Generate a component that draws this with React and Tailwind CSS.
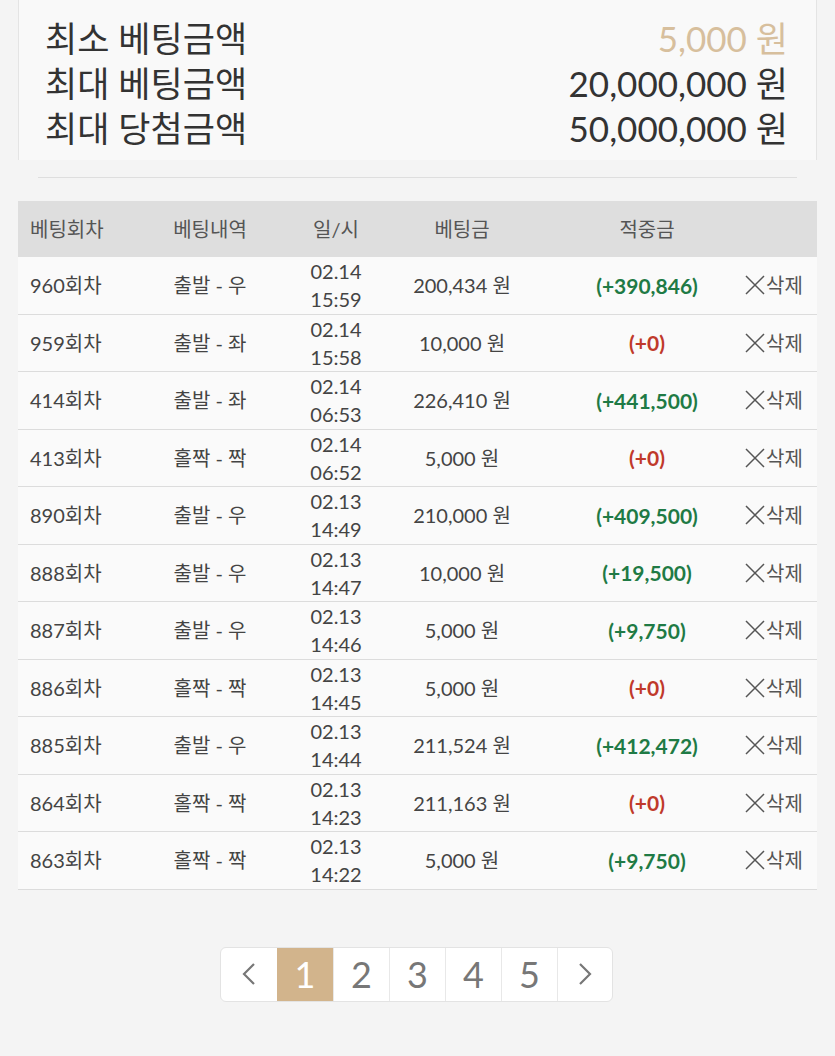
import React from "react";

const rows = [
  ["960회차", "출발 - 우", "02.14", "15:59", "200,434 원", "(+390,846)", true],
  ["959회차", "출발 - 좌", "02.14", "15:58", "10,000 원", "(+0)", false],
  ["414회차", "출발 - 좌", "02.14", "06:53", "226,410 원", "(+441,500)", true],
  ["413회차", "홀짝 - 짝", "02.14", "06:52", "5,000 원", "(+0)", false],
  ["890회차", "출발 - 우", "02.13", "14:49", "210,000 원", "(+409,500)", true],
  ["888회차", "출발 - 우", "02.13", "14:47", "10,000 원", "(+19,500)", true],
  ["887회차", "출발 - 우", "02.13", "14:46", "5,000 원", "(+9,750)", true],
  ["886회차", "홀짝 - 짝", "02.13", "14:45", "5,000 원", "(+0)", false],
  ["885회차", "출발 - 우", "02.13", "14:44", "211,524 원", "(+412,472)", true],
  ["864회차", "홀짝 - 짝", "02.13", "14:23", "211,163 원", "(+0)", false],
  ["863회차", "홀짝 - 짝", "02.13", "14:22", "5,000 원", "(+9,750)", true],
];

const cols = "grid grid-cols-[122px_140px_112px_140px_206px_77px]";

const XIcon = () => (
  <svg width="20" height="20" viewBox="0 0 20 20" className="shrink-0">
    <path d="M1 1 L19 19 M19 1 L1 19" stroke="#555" strokeWidth="1.5" fill="none" />
  </svg>
);

export default function App() {
  return (
    <div
      className="min-h-screen bg-[#f4f4f4] text-[#444]"
      style={{ fontFamily: "Lato, 'Noto Sans CJK KR', sans-serif" }}
    >
      {/* limits card */}
      <div className="mx-[18px] bg-[#f9f9f9] border-x border-[#e4e4e4] pt-[16px] pb-[9px] pl-[26px] pr-[28px] text-[35px] leading-[45px] text-[#333]">
        <div className="flex justify-between">
          <span>최소 베팅금액</span>
          <span className="text-[#d7bf9d]">5,000 원</span>
        </div>
        <div className="flex justify-between">
          <span>최대 베팅금액</span>
          <span>20,000,000 원</span>
        </div>
        <div className="flex justify-between">
          <span>최대 당첨금액</span>
          <span>50,000,000 원</span>
        </div>
      </div>
      <div className="mx-[38px] mt-[17px] border-b border-[#dedede]"></div>

      {/* history table */}
      <div className="mx-[18px] mt-[23px] text-[20px]">
        <div className={`${cols} h-[56px] items-center bg-[#dedede] text-[#555]`}>
          <div className="pl-[12px]">베팅회차</div>
          <div className="text-center">베팅내역</div>
          <div className="text-center">일/시</div>
          <div className="text-center">베팅금</div>
          <div className="text-center pl-[24px]">적중금</div>
          <div></div>
        </div>
        {rows.map((r, i) => (
          <div
            key={i}
            className={`${cols} h-[57.5px] items-center bg-[#fafafa] border-b border-[#dcdcdc]`}
          >
            <div className="pl-[12px]">{r[0]}</div>
            <div className="text-center">{r[1]}</div>
            <div className="text-center leading-[28px]">
              <div>{r[2]}</div>
              <div>{r[3]}</div>
            </div>
            <div className="text-center">{r[4]}</div>
            <div
              className={`text-center pl-[24px] text-[21px] font-bold ${
                r[6] ? "text-[#1f7a45]" : "text-[#c0392b]"
              }`}
            >
              {r[5]}
            </div>
            <div className="flex items-center gap-[1px] pl-[7px] text-[#555]">
              <XIcon />
              <span>삭제</span>
            </div>
          </div>
        ))}
      </div>

      {/* pagination */}
      <div className="flex justify-center pt-[57px] pb-[54px] pr-[2px]">
        <div className="flex h-[55px] overflow-hidden rounded-md border border-[#e3e3e3] bg-white text-[36px] text-[#777]">
          <div className="flex w-[56px] items-center justify-center">
            <svg width="16" height="24" viewBox="0 0 16 24">
              <path d="M13 2 L3 12 L13 22" stroke="#777" strokeWidth="2.2" fill="none" />
            </svg>
          </div>
          <div className="flex w-[56px] items-center justify-center bg-[#d2b48c] text-white">1</div>
          {["2", "3", "4", "5"].map((n) => (
            <div key={n} className="flex w-[56px] items-center justify-center border-l border-[#e8e8e8]">
              {n}
            </div>
          ))}
          <div className="flex w-[55px] items-center justify-center border-l border-[#e8e8e8]">
            <svg width="16" height="24" viewBox="0 0 16 24">
              <path d="M3 2 L13 12 L3 22" stroke="#777" strokeWidth="2.2" fill="none" />
            </svg>
          </div>
        </div>
      </div>
    </div>
  );
}
